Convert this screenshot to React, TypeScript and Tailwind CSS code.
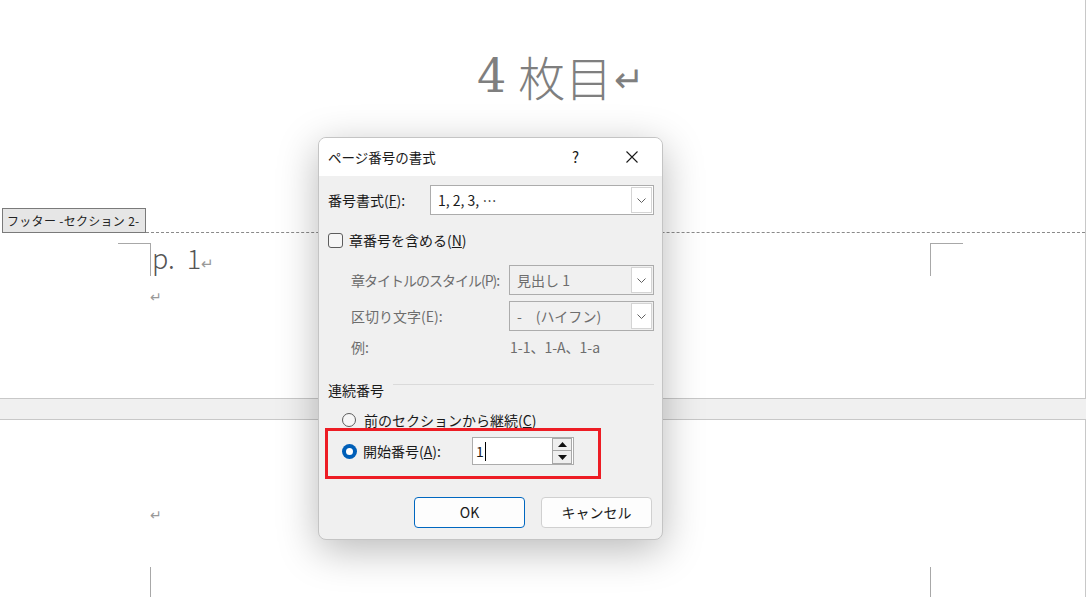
import React from 'react';

const UI = "font-['Segoe_UI','Noto_Sans_CJK_JP',sans-serif]";

function Chevron() {
  return (
    <svg width="9" height="5" viewBox="0 0 9 5" fill="none">
      <path d="M0.5 0.5 L4.5 4.5 L8.5 0.5" stroke="#606060" strokeWidth="1" />
    </svg>
  );
}

function Select({ value, disabled }: { value: string; disabled?: boolean }) {
  return (
    <div
      className={`flex h-[30px] border border-[#acacac] ${disabled ? 'bg-[#f0f0f0] text-[#6d6d6d]' : 'bg-white text-[#1a1a1a]'}`}
    >
      <div className="flex flex-1 items-center whitespace-nowrap pl-[7px] text-[14px]">{value}</div>
      <div className="m-px flex w-[21px] items-center justify-center border border-[#d4d4d4] bg-white">
        <Chevron />
      </div>
    </div>
  );
}

function Radio({ checked }: { checked?: boolean }) {
  if (checked) {
    return (
      <div className="flex h-[15px] w-[15px] shrink-0 items-center justify-center rounded-full bg-[#005fb8]">
        <div className="h-[7px] w-[7px] rounded-full bg-white" />
      </div>
    );
  }
  return <div className="h-[14px] w-[14px] shrink-0 rounded-full border border-[#5c5c5c] bg-[#f6f6f6]" />;
}

function PageNumberDialog() {
  return (
    <div
      className={`absolute left-[318px] top-[137px] flex h-[403px] w-[345px] flex-col overflow-hidden rounded-lg border border-[#c4c4c4] bg-[#f0f0f0] shadow-[0_10px_40px_rgba(0,0,0,0.28)] ${UI}`}
    >
      {/* title bar */}
      <div className="flex h-[38px] items-center bg-white pl-[9px] text-[13.5px] text-[#1a1a1a]">
        <span>ページ番号の書式</span>
        <span className="ml-auto mr-[47px] text-[15px]">?</span>
        <svg width="12" height="12" viewBox="0 0 12 12" className="mr-[24px]">
          <path d="M0.5 0.5 L11.5 11.5 M11.5 0.5 L0.5 11.5" stroke="#1a1a1a" strokeWidth="1.1" />
        </svg>
      </div>

      {/* body */}
      <div className="flex flex-col pl-[9px] pr-[8px] pt-[9px] text-[14px] text-[#1a1a1a]">
        <div className="flex items-center">
          <span className="w-[102px] whitespace-nowrap">
            番号書式(<span className="underline">F</span>):
          </span>
          <div className="flex-1">
            <Select value="1, 2, 3, …" />
          </div>
        </div>

        <div className="mt-[15px] flex h-[20px] items-center">
          <div className="h-[15px] w-[15px] rounded-[3px] border border-[#5c5c5c] bg-[#f6f6f6]" />
          <span className="ml-[6px]">
            章番号を含める(<span className="underline">N</span>)
          </span>
        </div>

        <div className="mt-[15px] flex items-center pl-[23px] text-[#6d6d6d]">
          <span className="flex-1 whitespace-nowrap tracking-[-1px]">章タイトルのスタイル(P):</span>
          <div className="w-[145px] shrink-0">
            <Select value="見出し 1" disabled />
          </div>
        </div>

        <div className="mt-[6px] flex items-center pl-[23px] text-[#6d6d6d]">
          <span className="flex-1 whitespace-nowrap">区切り文字(E):</span>
          <div className="w-[145px] shrink-0">
            <Select value="-　(ハイフン)" disabled />
          </div>
        </div>

        <div className="mt-[6px] flex h-[20px] items-center pl-[23px] text-[#6d6d6d]">
          <span className="w-[159px]">例:</span>
          <span>1-1、1-A、1-a</span>
        </div>

        <div className="mt-[23px] flex h-[20px] items-center">
          <span>連続番号</span>
          <div className="mb-[11px] ml-[9px] h-px flex-1 bg-[#dadada]" />
        </div>

        <div className="mt-[12px] flex h-[16px] items-center pl-[14px]">
          <Radio />
          <span className="ml-[8px]">
            前のセクションから継続(<span className="underline">C</span>)
          </span>
        </div>

        <div className="-ml-[3px] flex h-[51px] w-[276px] items-start border-[3px] border-[#ed1c24] pl-[14px] pt-[6px]">
          <div className="flex h-[28px] items-center">
            <Radio checked />
            <span className="ml-[6px] w-[109px] whitespace-nowrap">
              開始番号(<span className="underline">A</span>):
            </span>
          </div>
          <div className="flex h-[28px] w-[102px] items-center border border-[#acacac] bg-white">
            <span className="ml-[3px] flex items-center">
              1<span className="ml-px h-[19px] w-px bg-black" />
            </span>
            <div className="ml-auto mr-px flex w-[20px] flex-col">
              <div className="flex h-[13px] items-center justify-center border border-[#a8a8a8] bg-[#efefef]">
                <svg width="9" height="5" viewBox="0 0 9 5"><path d="M4.5 0 L9 5 L0 5 Z" fill="#111" /></svg>
              </div>
              <div className="flex h-[13px] items-center justify-center border border-t-0 border-[#a8a8a8] bg-[#efefef]">
                <svg width="9" height="5" viewBox="0 0 9 5"><path d="M0 0 L9 0 L4.5 5 Z" fill="#111" /></svg>
              </div>
            </div>
          </div>
        </div>

        <div className="mt-[18px] flex justify-end gap-[16px] pr-[2px]">
          <button className="flex h-[31px] w-[111px] items-center justify-center rounded-[4px] border border-[#0067c0] bg-[#fdfdfd] text-[14px]">
            OK
          </button>
          <button className="flex h-[31px] w-[111px] items-center justify-center rounded-[4px] border border-[#d0d0d0] bg-[#fdfdfd] text-[14px]">
            キャンセル
          </button>
        </div>
      </div>
    </div>
  );
}

export default function App() {
  return (
    <div className={`relative flex h-[597px] w-[1086px] flex-col overflow-hidden bg-white ${UI}`}>
      {/* upper page */}
      <div className="flex h-[398px] flex-col border-r border-[#c8c8c8]">
        <div className="ml-[477px] mt-[52px] flex h-[48px] items-center text-[47px] leading-[48px] text-[#7f7f7f]">
          <span className="font-['DejaVu_Serif','Liberation_Serif',serif] text-[46px] font-normal">4</span>
          <span className="ml-[12px] font-['Noto_Sans_CJK_JP',sans-serif] font-light">枚目</span>
          <span className="ml-[2px] font-['Noto_Sans_CJK_JP',sans-serif] text-[36px] font-thin">↵</span>
        </div>

        <div className="mt-[108px] flex items-end pl-[2px]">
          <div className="flex h-[25px] w-[144px] items-center border border-[#7a7a7a] bg-[#e6e6e6] pl-[4px] text-[12px] tracking-[0.3px] text-[#222]">
            フッター -セクション 2-
          </div>
          <div className="h-[25px] flex-1 border-b border-dashed border-[#8a8a8a]" />
        </div>

        <div className="mt-[10px] flex items-start">
          <div className="ml-[118px] h-[33px] w-[33px] border-r border-t border-[#a8a8a8]" />
          <div className="ml-px text-[27px] font-light leading-[30px] text-[#555]">
            p.&nbsp;&nbsp;1<span className="text-[15px] text-[#999]">↵</span>
          </div>
          <div className="ml-auto mr-[122px] h-[33px] w-[33px] border-l border-t border-[#a8a8a8]" />
        </div>

        <div className="ml-[150px] mt-[10px] text-[14px] leading-[16px] text-[#999]">↵</div>
      </div>

      {/* page gap */}
      <div className="h-[22px] border-y border-[#c8c8c8] bg-[#f0f0f0]" />

      {/* lower page */}
      <div className="flex flex-1 flex-col border-r border-[#c8c8c8]">
        <div className="ml-[150px] mt-[86px] text-[14px] leading-[16px] text-[#999]">↵</div>
        <div className="mt-auto flex h-[30px]">
          <div className="ml-[150px] w-px bg-[#a8a8a8]" />
          <div className="ml-[779px] w-px bg-[#a8a8a8]" />
        </div>
      </div>

      <PageNumberDialog />
    </div>
  );
}
